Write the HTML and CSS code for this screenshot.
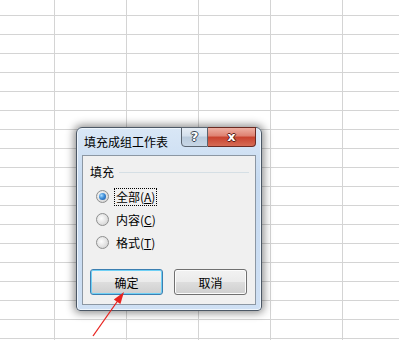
FILE: index.html
```html
<!DOCTYPE html>
<html lang="zh-CN">
<head>
    <meta charset="UTF-8">
    <title>填充成组工作表</title>
    <link rel="stylesheet" href="styles.css">
</head>
<body>
    <div class="sheet">
        <!-- Fill dialog -->
        <div class="dialog">
            <div class="title-bar">
                <span class="title">填充成组工作表</span>
                <div class="caption-buttons">
                    <span class="cap-btn help">?</span>
                    <span class="cap-btn close">x</span>
                </div>
            </div>
            <div class="client">
                <div class="group-head">
                    <span class="group-label">填充</span>
                    <span class="group-line"></span>
                </div>
                <ul class="options">
                    <li class="option">
                        <span class="radio checked"></span>
                        <span class="label focused">全部(<u>A</u>)</span>
                    </li>
                    <li class="option">
                        <span class="radio"></span>
                        <span class="label">内容(<u>C</u>)</span>
                    </li>
                    <li class="option">
                        <span class="radio"></span>
                        <span class="label">格式(<u>T</u>)</span>
                    </li>
                </ul>
                <div class="actions">
                    <button class="btn default">确定</button>
                    <button class="btn">取消</button>
                </div>
            </div>
        </div>

        <svg class="arrow" width="399" height="340" viewBox="0 0 399 340">
            <line x1="93" y1="336" x2="119" y2="299" stroke="#e8231f" stroke-width="1.3"/>
            <polygon points="124,292 120.4,304.1 113.8,299.5" fill="#e8231f"/>
        </svg>
    </div>
</body>
</html>
```

FILE: styles.css
```css
/* Page */
body {
    margin: 0;
    font-family: "Noto Sans CJK SC", "Liberation Sans", sans-serif;
    font-size: 12px;
    color: #000;
}

.sheet {
    position: relative;
    width: 399px;
    height: 340px;
    overflow: hidden;
    background-color: #fff;
    background-image:
        linear-gradient(to right, #d4d4d4 1px, transparent 1px),
        linear-gradient(to bottom, #d4d4d4 1px, transparent 1px);
    background-size: 72px 19px;
    background-position: 54px 15px;
}

/* Dialog frame */
.dialog {
    position: absolute;
    left: 76px;
    top: 127px;
    width: 174px;
    height: 177px;
    border: 1px solid #4c5866;
    border-radius: 6px 6px 4px 4px;
    background: linear-gradient(to bottom, #d9e7f6 0%, #c6daf1 30%, #cfe0f4 100%);
    box-shadow: 0 0 9px 2px rgba(0, 0, 0, 0.45), inset 0 0 0 1px #eef5fc;
    display: flex;
    flex-direction: column;
    padding: 0 5px 5px 5px;
}

.title-bar {
    height: 27px;
    display: flex;
    justify-content: space-between;
    align-items: flex-start;
}

.title {
    margin-top: 6px;
    padding-left: 2px;
    line-height: 16px;
    font-size: 12px;
}

.caption-buttons {
    display: flex;
    margin-top: -1px;
    margin-right: 0;
}

.cap-btn {
    height: 18px;
    line-height: 17px;
    text-align: center;
    color: #fff;
    font-family: "DejaVu Sans", sans-serif;
    font-weight: bold;
    font-size: 13px;
    border: 1px solid #5a6470;
    text-shadow: 1px 0 #3b4552, -1px 0 #3b4552, 0 1px #3b4552, 0 -1px #3b4552;
}

.help {
    width: 25px;
    border-radius: 0 0 0 4px;
    background: linear-gradient(to bottom, #e6edf5 0%, #d3dfec 45%, #b9cadc 50%, #c8d7e6 100%);
}

.close {
    width: 47px;
    border-left: none;
    border-color: #6b2a22;
    border-radius: 0 0 4px 0;
    background: linear-gradient(to bottom, #eeb0a3 0%, #de8070 45%, #c8422e 50%, #d66b55 100%);
    text-shadow: 1px 0 #5a1e16, -1px 0 #5a1e16, 0 1px #5a1e16, 0 -1px #5a1e16;
}

/* Client area */
.client {
    flex: 1;
    background: #f0f0f0;
    border: 1px solid #8c97a3;
    padding: 8px 6px 0 7px;
}

.group-head {
    display: flex;
    align-items: center;
    height: 16px;
}

.group-label {
    line-height: 16px;
}

.group-line {
    flex: 1;
    height: 1px;
    margin-left: 5px;
    background: #d5dfe5;
}

.options {
    list-style: none;
    margin: 5px 0 0 6px;
    padding: 0;
}

.option {
    height: 23px;
    display: flex;
    align-items: center;
}

.radio {
    width: 11px;
    height: 11px;
    border: 1px solid #8e8f8f;
    border-radius: 50%;
    background: radial-gradient(circle at 40% 40%, #fdfdfd 0%, #e2e2e2 55%, #c8c8c8 100%);
    display: flex;
    align-items: center;
    justify-content: center;
}

.radio.checked::after {
    content: "";
    width: 7px;
    height: 7px;
    border-radius: 50%;
    background: radial-gradient(circle at 35% 35%, #a9dcff 0%, #3f8ed8 45%, #174f9a 100%);
}

.label {
    margin-left: 5px;
    padding: 0 1px;
    line-height: 16px;
    border: 1px dotted transparent;
}

.label.focused {
    border-color: #000;
}

.label u {
    text-underline-offset: 1px;
}

/* Buttons */
.actions {
    display: flex;
    gap: 11px;
    margin-top: 15px;
}

.btn {
    width: 73px;
    height: 26px;
    padding: 0;
    font-family: "Noto Sans CJK SC", "Liberation Sans", sans-serif;
    font-size: 12px;
    color: #000;
    border: 1px solid #707070;
    border-radius: 3px;
    background: linear-gradient(to bottom, #f2f2f2 0%, #ebebeb 48%, #dddddd 52%, #cfcfcf 100%);
    box-shadow: inset 0 0 0 1px #fcfcfc;
}

.btn.default {
    border-color: #3c7fb1;
    box-shadow: inset 0 0 0 1px #6fd0f5;
}

/* Annotation arrow */
.arrow {
    position: absolute;
    left: 0;
    top: 0;
}
```
